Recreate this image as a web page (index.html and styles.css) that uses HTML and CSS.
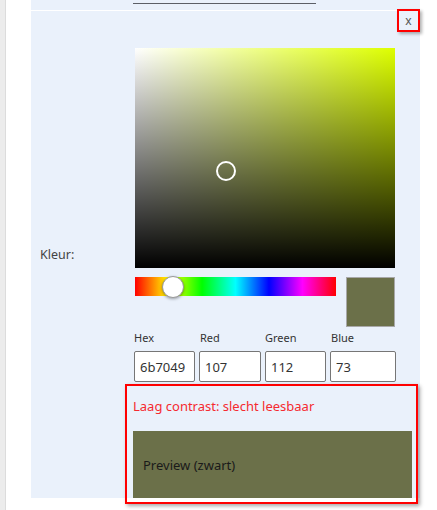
FILE: index.html
```html
<!DOCTYPE html>
<html lang="nl">
<head>
<meta charset="utf-8">
<link rel="stylesheet" href="styles.css">
</head>
<body>
<div class="page">
  <div class="edge"></div>
  <div class="gap"></div>
  <div class="panel">
    <div class="top-row"><div class="underline"></div></div>
    <button class="close">x</button>
    <div class="editor">
      <label class="field-label">Kleur:</label>
      <div class="picker">
        <div class="sat">
          <div class="sat-white"></div>
          <div class="sat-black"></div>
          <div class="marker" style="left:90.5px; top:123.4px"></div>
        </div>
        <div class="hue-row">
          <div class="hue"><div class="thumb" style="left:38px"></div></div>
          <div class="swatch"></div>
        </div>
        <div class="channels">
          <span class="ch-label">Hex</span>
          <span class="ch-label">Red</span>
          <span class="ch-label">Green</span>
          <span class="ch-label">Blue</span>
          <input class="ch-input" value="6b7049">
          <input class="ch-input" value="107">
          <input class="ch-input" value="112">
          <input class="ch-input" value="73">
        </div>
        <div class="contrast">
          <div class="warning">Laag contrast: slecht leesbaar</div>
          <div class="preview">Preview (zwart)</div>
        </div>
      </div>
    </div>
  </div>
</div>
</body>
</html>
```
FILE: styles.css
```css
* { box-sizing: border-box; }
html, body { margin: 0; padding: 0; background: #fff; }
body { font-family: "Noto Sans", "Open Sans", sans-serif; color: #333; }

.page { display: flex; height: 510px; }
.edge { width: 6px; background: #ececec; border-right: 1px solid #dcdcdc; }
.gap { width: 25px; }
.panel {
  position: relative;
  width: 389px;
  height: 498px;
  background: #eaf1fb;
}
.top-row {
  height: 11px;
  border-bottom: 1px solid #fff;
  padding-top: 3px;
}
.underline {
  margin-left: 102px;
  width: 183px;
  height: 1px;
  background: #5c5f66;
}
.close {
  position: absolute;
  top: 9px;
  right: 0;
  width: 23px;
  height: 23px;
  border: 2px solid #f00;
  background: #eaf1fb;
  color: #555;
  font: 12px "Noto Sans", sans-serif;
  padding: 0;
  line-height: 17px;
  box-shadow: 2px 2px 3px rgba(0,0,0,0.3);
}
.editor {
  display: grid;
  grid-template-columns: 95px 260px;
  padding: 37px 0 0 9px;
}
.field-label {
  font-size: 12.5px;
  line-height: 20px;
  color: #444;
  padding-top: 197px;
}
.picker { display: flex; flex-direction: column; }
.sat {
  position: relative;
  width: 260px;
  height: 220px;
  background: #deff00;
}
.sat-white {
  position: absolute; inset: 0;
  background: linear-gradient(to right, #fff, rgba(255,255,255,0));
}
.sat-black {
  position: absolute; inset: 0;
  background: linear-gradient(to top, #000, rgba(0,0,0,0));
}
.marker {
  position: absolute;
  width: 20px; height: 20px;
  margin: -10px 0 0 -10px;
  border: 2px solid #fff;
  border-radius: 50%;
}
.hue-row {
  display: flex;
  gap: 10px;
  margin-top: 9px;
}
.hue {
  position: relative;
  width: 202px;
  height: 19px;
  background: linear-gradient(to right, #f00 0%, #ff0 16.66%, #0f0 33.33%, #0ff 50%, #00f 66.66%, #f0f 83.33%, #f00 100%);
}
.thumb {
  position: absolute;
  top: -1.5px;
  width: 22px; height: 22px;
  margin-left: -11px;
  border-radius: 50%;
  background: #fff;
  border: 1px solid #999;
  box-shadow: 0 1px 3px rgba(0,0,0,0.35);
}
.swatch {
  width: 49px;
  height: 50px;
  background: #6b7049;
  border: 1px solid #a8a8a8;
}
.channels {
  display: grid;
  grid-template-columns: 61px 62px 61px 66px;
  column-gap: 4px;
  margin: 3px 0 0 -1px;
}
.ch-label {
  font-size: 11px;
  line-height: 16px;
  color: #333;
  margin-bottom: 5px;
}
.channels .ch-label:nth-child(2) { padding-left: 1px; }
.channels .ch-label:nth-child(4) { padding-left: 1px; }
.ch-input {
  width: 100%;
  height: 31px;
  border: 1px solid #767676;
  border-radius: 2px;
  background: #fff;
  font: 13px "Noto Sans", sans-serif;
  color: #333;
  padding: 0 0 0 5px;
  margin: 0;
}
.contrast {
  width: 293px;
  margin: 2px 0 0 -10px;
  border: 2px solid #f00;
  box-shadow: 2px 2px 4px rgba(0,0,0,0.35);
  padding: 10px 4px 4px 6px;
}
.warning {
  color: #f52a30;
  font-size: 13px;
  line-height: 20px;
}
.preview {
  margin-top: 15px;
  height: 67px;
  background: #6b7049;
  color: #1a1a1a;
  font-size: 13px;
  display: flex;
  align-items: center;
  padding-left: 10px;
}
```
